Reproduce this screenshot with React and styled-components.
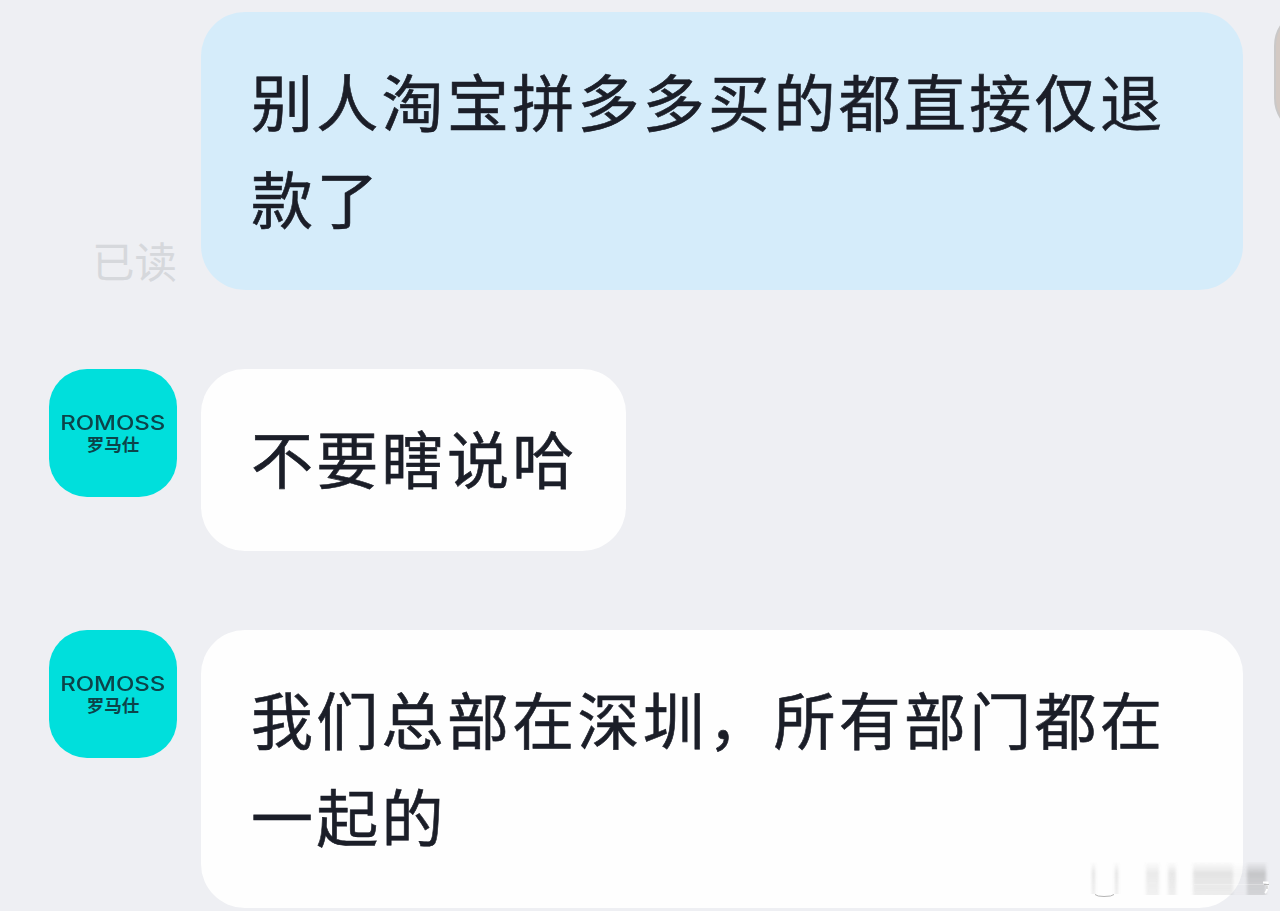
import React from 'react'
import styled, { createGlobalStyle } from 'styled-components'

const messages = [
    { id: 1, mine: true, read: true, wide: true, lines: ['别人淘宝拼多多买的都直接仅退', '款了'] },
    { id: 2, lines: ['不要瞎说哈'] },
    { id: 3, wide: true, lines: ['我们总部在深圳，所有部门都在', '一起的'] },
]

const bars = [
    { x: 56, w: 13, o: 0.17 },
    { x: 78, w: 8, o: 0.2 },
    { x: 103, w: 21, o: 0.23 },
    { x: 124, w: 19, o: 0.23 },
    { x: 143, w: 14, o: 0.06 },
    { x: 157, w: 19, o: 0.4 },
]

function ShopAvatar() {
    return (
        <Avatar>
            <Brand>ROMOSS</Brand>
            <BrandCn>罗马仕</BrandCn>
        </Avatar>
    )
}

function Watermark() {
    return (
        <Mark width="190" height="51" viewBox="0 0 190 51">
            <defs>
                <linearGradient id="fade" x1="0" y1="0" x2="0" y2="1">
                    <stop offset="0" stopColor="#777" stopOpacity="0.05" />
                    <stop offset="0.35" stopColor="#777" stopOpacity="0.85" />
                    <stop offset="1" stopColor="#888" stopOpacity="0.65" />
                </linearGradient>
                <filter id="soft"><feGaussianBlur stdDeviation="1.8 0.5" /></filter>
            </defs>
            <g filter="url(#soft)">
                {bars.map(b => (
                    <rect key={b.x} x={b.x} y="12" width={b.w} height="33" fill="url(#fade)" opacity={b.o} />
                ))}
                <rect x="2" y="12" width="3" height="32" fill="url(#fade)" opacity="0.25" />
                <rect x="25" y="12" width="3" height="32" fill="url(#fade)" opacity="0.25" />
            </g>
            <path d="M5 44.5Q7 46.5 14 46.5Q22 46.5 24 44.5" fill="none" stroke="#b4b4b4" strokeWidth="1" />
            <path d="M104 34.5H174" stroke="#fff" strokeWidth="1" opacity="0.3" />
            <path d="M173 32.5H177.5V35Q177.5 41 175 43" fill="none" stroke="#fff" strokeWidth="2" />
            <path d="M174 34.5H179M177 35.5V39" fill="none" stroke="#bbb" strokeWidth="1" />
        </Mark>
    )
}

export default function App() {
    return (
        <Chat>
            <GlobalStyle />
            {messages.map(m => (
                <Row key={m.id}>
                    <Side $mine={m.mine}>
                        {m.mine ? m.read && <ReadState>已读</ReadState> : <ShopAvatar />}
                    </Side>
                    <Bubble $mine={m.mine} $wide={m.wide}>
                        {m.lines.map(line => <Line key={line}>{line}</Line>)}
                    </Bubble>
                    {m.mine && <MyAvatar />}
                </Row>
            ))}
            <Watermark />
        </Chat>
    )
}

const GlobalStyle = createGlobalStyle`
body {
    margin: 0;
    background-color: #eeeff3;
}
`

const Chat = styled.div`
position: relative;
display: flex;
flex-direction: column;
gap: 79px;
box-sizing: border-box;
width: 1280px;
height: 911px;
padding-top: 12px;
overflow: hidden;
background-color: #eeeff3;
font-family: "Noto Sans CJK SC", sans-serif;
`

const Row = styled.div`
display: flex;
flex-shrink: 0;
`

const Side = styled.div`
display: flex;
flex-direction: column;
flex-shrink: 0;
align-items: flex-end;
justify-content: ${p => p.$mine ? 'flex-end' : 'flex-start'};
width: 177px;
margin-right: 24px;
`

const Bubble = styled.div`
flex-shrink: 0;
box-sizing: border-box;
width: ${p => p.$wide ? '1042px' : 'auto'};
min-height: 182px;
padding: 40px 48px 44px 50px;
border-radius: 44px;
background-color: ${p => p.$mine ? '#d5ecfa' : '#fefefe'};
color: #1b1e28;
`

const Line = styled.p`
margin: 0;
font-size: 62px;
line-height: 97px;
letter-spacing: 3.3px;
white-space: nowrap;
-webkit-text-stroke: 0.6px currentColor;
`

const ReadState = styled.span`
margin-bottom: 6px;
font-size: 42.5px;
font-weight: 400;
line-height: 48px;
color: #d6d8dc;
`

const Avatar = styled.div`
display: flex;
flex-direction: column;
align-items: center;
box-sizing: border-box;
width: 128px;
height: 128px;
padding-top: 43px;
border-radius: 38px;
background-color: #00dfdc;
color: #0c444a;
`

const Brand = styled.span`
font-family: Inter, sans-serif;
font-size: 19.5px;
font-weight: 500;
line-height: 22px;
transform: scaleX(1.23);
`

const BrandCn = styled.span`
font-size: 17.5px;
font-weight: 700;
line-height: 19px;
`

const MyAvatar = styled.div`
flex-shrink: 0;
box-sizing: border-box;
width: 128px;
height: 128px;
margin: -4px 0 0 31px;
border: 2px solid #c9c8c8;
border-radius: 38px;
background-color: #d3c9c3;
`

const Mark = styled.svg`
position: absolute;
right: 0;
bottom: 10px;
`
